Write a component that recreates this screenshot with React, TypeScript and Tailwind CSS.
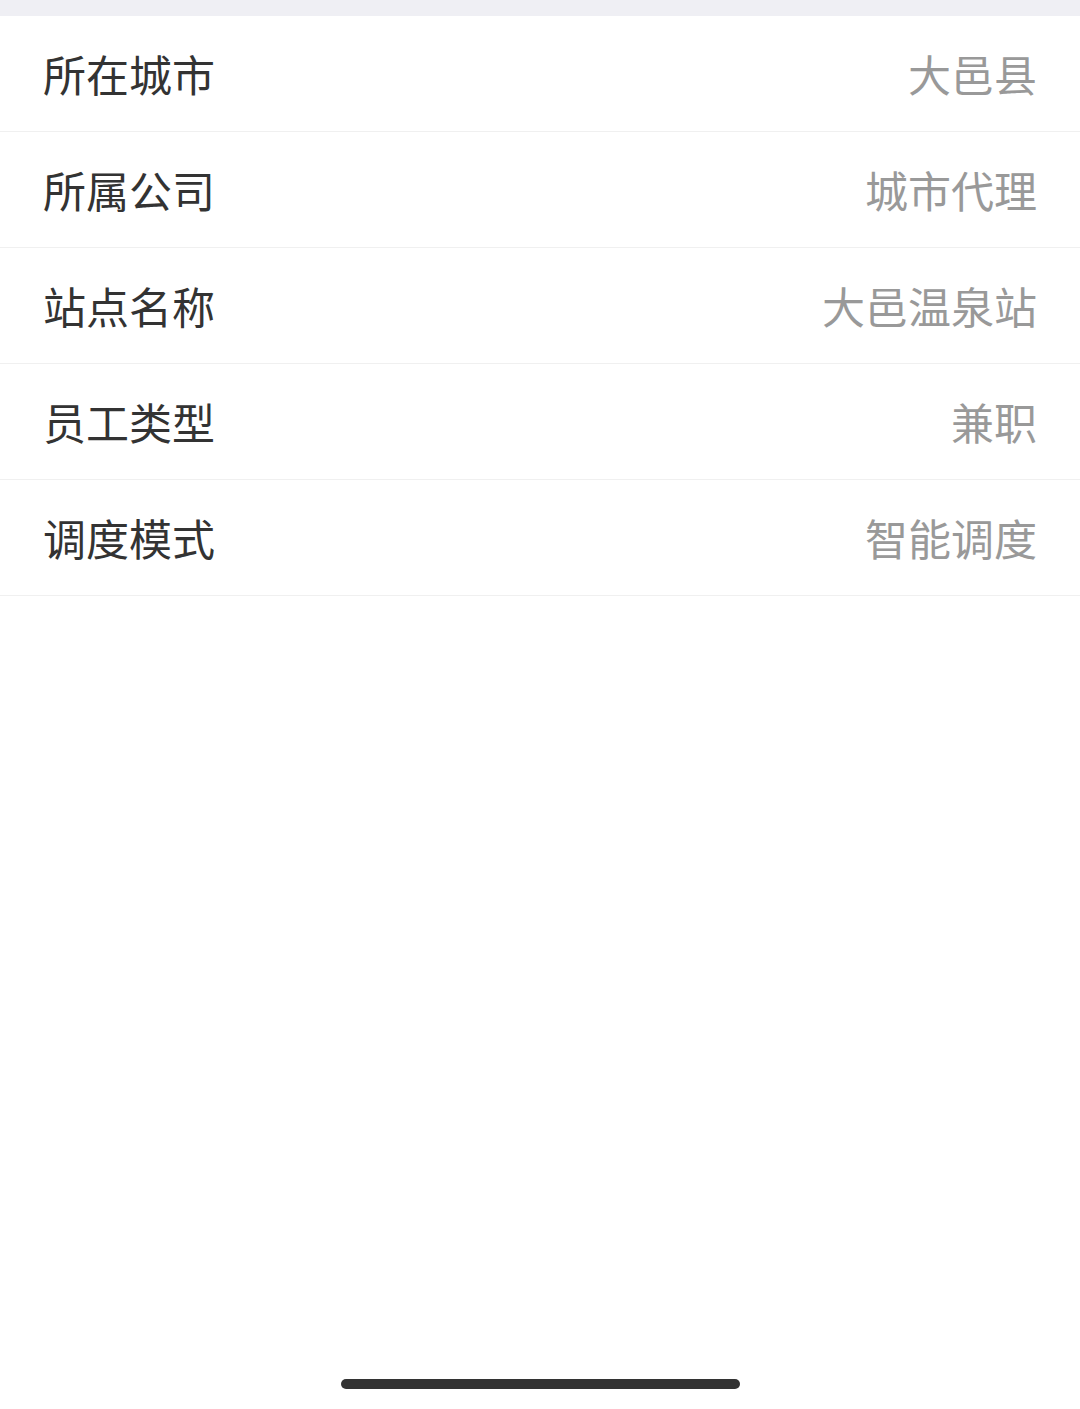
import React from 'react';

interface InfoRowProps {
  label: string;
  value: string;
}

const InfoRow: React.FC<InfoRowProps> = ({ label, value }) => (
  <div className="flex items-center justify-between h-[116px] px-[43px] border-b border-[#f0f0f0]">
    <span className="text-[43px] leading-none text-[#333333]">{label}</span>
    <span className="text-[43px] leading-none text-[#999999]">{value}</span>
  </div>
);

const App: React.FC = () => {
  const rows = [
    { label: '所在城市', value: '大邑县' },
    { label: '所属公司', value: '城市代理' },
    { label: '站点名称', value: '大邑温泉站' },
    { label: '员工类型', value: '兼职' },
    { label: '调度模式', value: '智能调度' },
  ];

  return (
    <div
      className="w-[1080px] h-[1409px] bg-white flex flex-col"
      style={{ fontFamily: '"Noto Sans CJK SC", "Noto Sans", sans-serif' }}
    >
      <div className="h-[16px] bg-[#efeff4]" />
      <div className="flex flex-col">
        {rows.map((row, index) => (
          <InfoRow key={index} {...row} />
        ))}
      </div>
      <div className="flex-1" />
      <div className="flex justify-center pb-[20px]">
        <div className="w-[399px] h-[10px] rounded-full bg-[#333333]" />
      </div>
    </div>
  );
};

export default App;
